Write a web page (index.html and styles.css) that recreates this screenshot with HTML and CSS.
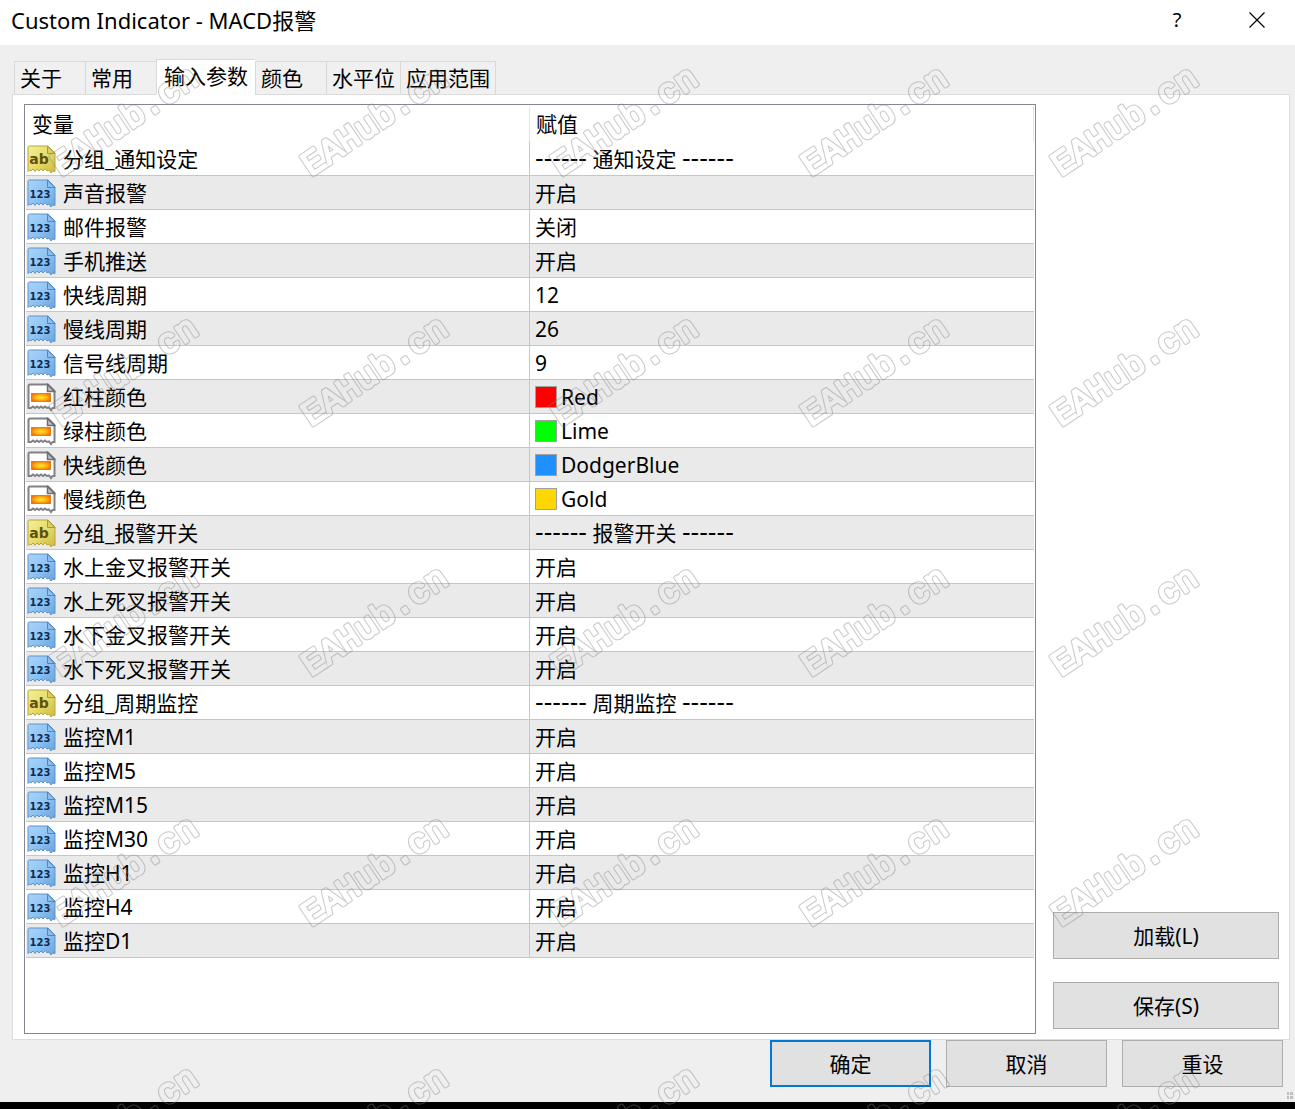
FILE: index.html
```html
<!DOCTYPE html>
<html lang="zh-CN">
<head>
<meta charset="utf-8">
<meta name="viewport" content="width=device-width, initial-scale=1">
<title>Custom Indicator - MACD报警</title>
<link rel="stylesheet" href="styles.css">
</head>
<body>
<svg class="defs" aria-hidden="true">
  <defs>
    <linearGradient id="blue" x1="0" y1="0" x2="1" y2="1"><stop offset="0" stop-color="#a9d4fb"/><stop offset=".5" stop-color="#8fc3f4"/><stop offset="1" stop-color="#65a3df"/></linearGradient>
    <linearGradient id="yellow" x1="0" y1="0" x2="1" y2="1"><stop offset="0" stop-color="#f5ef9c"/><stop offset=".5" stop-color="#e8dc6c"/><stop offset="1" stop-color="#cdb93f"/></linearGradient>
    <radialGradient id="amber" cx=".5" cy=".5" r=".6"><stop offset="0" stop-color="#ffe92e"/><stop offset=".5" stop-color="#ffb315"/><stop offset="1" stop-color="#f36a00"/></radialGradient>
    <symbol id="num" viewBox="0 -2 29 31">
      <path d="M1 2.500Q1 1 2.500 1H21L28 8V26.500L25.500 26L24 28L22 25L20 26L18.500 23.500L16 26L14 24L12 26L10 24L8 26.500L6 24L4 26L2.500 25L1 26.500Z" fill="url(#blue)" stroke="#5f93c6"/>
      <path d="M20.500 1V8.500H28Z" fill="#8dbdea" stroke="#4f87be"/>
      <text x="13" y="19" text-anchor="middle" class="glyph glyph-num">123</text>
    </symbol>
    <symbol id="str" viewBox="0 -2 29 31">
      <path d="M1 2.500Q1 1 2.500 1H21L28 8V26.500L25.500 26L24 28L22 25L20 26L18.500 23.500L16 26L14 24L12 26L10 24L8 26.500L6 24L4 26L2.500 25L1 26.500Z" fill="url(#yellow)" stroke="#b5a540"/>
      <path d="M20.500 1V8.500H28Z" fill="#dccf68" stroke="#ac9a32"/>
      <text x="12" y="19" text-anchor="middle" class="glyph glyph-str">ab</text>
    </symbol>
    <symbol id="clr" viewBox="0 -2 29 31">
      <path d="M1.500 3Q1.500 1.500 3 1.500H21L27.500 8V25L25.500 25L24 27L22 24.500L20 25L18 23.500L16 25L14 23.500L12 25L10 23.500L8 25L6 23.500L4 25L1.500 25Z" fill="#fff" stroke="#808285" stroke-width="2"/>
      <path d="M20.500 1.500V8.500H27.500Z" fill="#c4c4c6" stroke="#6c6e72" stroke-width="1.500"/>
      <rect x="4.500" y="10.500" width="19" height="8" fill="url(#amber)" stroke="#f07a10"/>
    </symbol>
    <mask id="outline" maskUnits="userSpaceOnUse" x="0" y="0" width="250" height="250">
      <g transform="translate(61 177) rotate(-34)" class="mark">
        <text class="mark-outer">EAHub.cn</text>
        <text class="mark-inner">EAHub.cn</text>
      </g>
    </mask>
    <pattern id="tile" width="250" height="250" patternUnits="userSpaceOnUse">
      <rect width="250" height="250" fill="#808080" fill-opacity=".42" mask="url(#outline)"/>
    </pattern>
  </defs>
</svg>

<main class="window">
  <header class="titlebar">
    <h1 class="title">Custom Indicator - MACD报警</h1>
    <button class="caption" type="button" aria-label="帮助"><span class="help">?</span></button>
    <button class="caption" type="button" aria-label="关闭"><svg width="16" height="16" viewBox="0 0 16 16"><path d="M.5.5L15.500 15.500M15.500.5L.5 15.500" stroke="#000" stroke-width="1.200"/></svg></button>
  </header>

  <div class="tabs" role="tablist">
    <button class="tab" type="button" role="tab">关于</button>
    <button class="tab" type="button" role="tab">常用</button>
    <button class="tab active" type="button" role="tab" aria-selected="true">输入参数</button>
    <button class="tab" type="button" role="tab">颜色</button>
    <button class="tab" type="button" role="tab">水平位</button>
    <button class="tab" type="button" role="tab">应用范围</button>
  </div>

  <section class="pane">
    <div class="list">
      <table class="params">
        <thead><tr><th>变量</th><th>赋值</th></tr></thead>
        <tbody>
          <tr><td><div class="cell"><svg class="icon"><use href="#str"/></svg>分组_通知设定</div></td><td><span class="dash">------</span> 通知设定 <span class="dash">------</span></td></tr>
          <tr><td><div class="cell"><svg class="icon"><use href="#num"/></svg>声音报警</div></td><td>开启</td></tr>
          <tr><td><div class="cell"><svg class="icon"><use href="#num"/></svg>邮件报警</div></td><td>关闭</td></tr>
          <tr><td><div class="cell"><svg class="icon"><use href="#num"/></svg>手机推送</div></td><td>开启</td></tr>
          <tr><td><div class="cell"><svg class="icon"><use href="#num"/></svg>快线周期</div></td><td>12</td></tr>
          <tr><td><div class="cell"><svg class="icon"><use href="#num"/></svg>慢线周期</div></td><td>26</td></tr>
          <tr><td><div class="cell"><svg class="icon"><use href="#num"/></svg>信号线周期</div></td><td>9</td></tr>
          <tr><td><div class="cell"><svg class="icon"><use href="#clr"/></svg>红柱颜色</div></td><td><div class="color"><span class="swatch red"></span>Red</div></td></tr>
          <tr><td><div class="cell"><svg class="icon"><use href="#clr"/></svg>绿柱颜色</div></td><td><div class="color"><span class="swatch lime"></span>Lime</div></td></tr>
          <tr><td><div class="cell"><svg class="icon"><use href="#clr"/></svg>快线颜色</div></td><td><div class="color"><span class="swatch dodger"></span>DodgerBlue</div></td></tr>
          <tr><td><div class="cell"><svg class="icon"><use href="#clr"/></svg>慢线颜色</div></td><td><div class="color"><span class="swatch gold"></span>Gold</div></td></tr>
          <tr><td><div class="cell"><svg class="icon"><use href="#str"/></svg>分组_报警开关</div></td><td><span class="dash">------</span> 报警开关 <span class="dash">------</span></td></tr>
          <tr><td><div class="cell"><svg class="icon"><use href="#num"/></svg>水上金叉报警开关</div></td><td>开启</td></tr>
          <tr><td><div class="cell"><svg class="icon"><use href="#num"/></svg>水上死叉报警开关</div></td><td>开启</td></tr>
          <tr><td><div class="cell"><svg class="icon"><use href="#num"/></svg>水下金叉报警开关</div></td><td>开启</td></tr>
          <tr><td><div class="cell"><svg class="icon"><use href="#num"/></svg>水下死叉报警开关</div></td><td>开启</td></tr>
          <tr><td><div class="cell"><svg class="icon"><use href="#str"/></svg>分组_周期监控</div></td><td><span class="dash">------</span> 周期监控 <span class="dash">------</span></td></tr>
          <tr><td><div class="cell"><svg class="icon"><use href="#num"/></svg>监控M1</div></td><td>开启</td></tr>
          <tr><td><div class="cell"><svg class="icon"><use href="#num"/></svg>监控M5</div></td><td>开启</td></tr>
          <tr><td><div class="cell"><svg class="icon"><use href="#num"/></svg>监控M15</div></td><td>开启</td></tr>
          <tr><td><div class="cell"><svg class="icon"><use href="#num"/></svg>监控M30</div></td><td>开启</td></tr>
          <tr><td><div class="cell"><svg class="icon"><use href="#num"/></svg>监控H1</div></td><td>开启</td></tr>
          <tr><td><div class="cell"><svg class="icon"><use href="#num"/></svg>监控H4</div></td><td>开启</td></tr>
          <tr><td><div class="cell"><svg class="icon"><use href="#num"/></svg>监控D1</div></td><td>开启</td></tr>
        </tbody>
      </table>
    </div>
    <div class="side">
      <button class="btn" type="button">加载(L)</button>
      <button class="btn" type="button">保存(S)</button>
    </div>
  </section>

  <footer class="actions">
    <button class="btn primary" type="button">确定</button>
    <button class="btn" type="button">取消</button>
    <button class="btn" type="button">重设</button>
    <svg class="grip" width="6" height="8" viewBox="0 0 6 8" aria-hidden="true"><path d="M0 0h2v3H0zM3 0h3v3H3zM0 4h2v3H0zM3 4h3v3H3z" fill="#bfbfbf"/></svg>
  </footer>

  <svg class="watermark" aria-hidden="true"><rect width="100%" height="100%" fill="url(#tile)"/></svg>
</main>
</body>
</html>
```
FILE: styles.css
```css
* { box-sizing: border-box; }

body {
  margin: 0;
  font: 21px/32px "Noto Sans", "Noto Sans CJK SC", sans-serif;
  color: #000;
  background: #000;
}

button { font: inherit; color: inherit; cursor: default; }

.defs { position: absolute; width: 0; height: 0; }

.window {
  position: relative;
  display: flex;
  flex-direction: column;
  min-height: 100vh;
  background: #efefef;
  border-bottom: 7px solid #000;
}

.titlebar {
  display: flex;
  align-items: center;
  height: 45px;
  padding: 0 0 6px 11px;
  background: #fff;
}
.title { flex: 1; margin: 0; font-size: 22px; font-weight: 400; }
.caption {
  display: flex;
  align-items: center;
  justify-content: center;
  width: 84px;
  height: 38px;
  padding: 0;
  border: 0;
  background: none;
}
.help { font-size: 20px; }
.caption + .caption { width: 76px; }

.tabs {
  display: flex;
  align-items: flex-end;
  height: 50px;
  padding-left: 14px;
  margin-bottom: -1px;
}
.tab {
  min-width: 71px;
  height: 34px;
  padding: 0 5px;
  border: 1px solid #d9d9d9;
  border-right-width: 0;
  background: #f0f0f0;
  text-align: left;
}
.tab:last-child { border-right-width: 1px; }
.tab.active {
  z-index: 1;
  height: 36px;
  padding: 0 7px 2px;
  border-bottom-color: #fff;
  background: #fff;
}

.pane {
  flex: 1;
  display: flex;
  gap: 17px;
  margin: 0 5px 0 12px;
  padding: 9px 10px 5px 11px;
  border: 1px solid #dcdcdc;
  background: #fff;
}

.list {
  flex: 1;
  padding: 1px;
  border: 1px solid #828790;
}
.params {
  width: 100%;
  table-layout: fixed;
  border-collapse: separate;
  border-spacing: 0;
}
.params th {
  height: 36px;
  padding: 0 6px;
  border-right: 1px solid #e5e5e5;
  font-weight: 400;
  text-align: left;
}
.params td {
  height: 34px;
  padding: 0 5px;
  border-bottom: 1px solid #c6c6c6;
}
.params td:first-child {
  padding: 0 1px;
  border-right: 1px solid #c6c6c6;
}
.params tbody tr:nth-child(even) { background: #eaeaea; }

.dash { font: 24px/20px "DejaVu Sans", sans-serif; }

.cell { display: flex; align-items: center; gap: 7px; }
.icon { flex: none; width: 29px; height: 31px; }
.glyph { font-family: "DejaVu Sans", sans-serif; font-weight: 700; }
.glyph-num { font-size: 10px; fill: #0b2d55; }
.glyph-str { font-size: 14px; fill: #5c5210; }

.color { display: flex; align-items: center; gap: 4px; }
.swatch { width: 22px; height: 22px; border: 1px solid #a0a0a0; }
.red { background: #f00; }
.lime { background: #0f0; }
.dodger { background: #1e90ff; }
.gold { background: #ffd700; }

.side {
  flex: none;
  display: flex;
  flex-direction: column;
  justify-content: flex-end;
  gap: 23px;
  width: 226px;
  padding-bottom: 5px;
}
.btn {
  height: 47px;
  padding: 0;
  border: 1px solid #adadad;
  background: #e1e1e1;
}
.btn.primary { border: 2px solid #0078d7; }

.actions {
  position: relative;
  display: flex;
  justify-content: flex-end;
  gap: 15px;
  padding: 0 12px 15px;
}
.actions .btn { width: 161px; }
.grip { position: absolute; right: 2px; bottom: 2px; }

/* Repeated mark laid over the whole dialog, bottom border included */
.watermark {
  position: absolute;
  z-index: 2;
  top: 0;
  left: 0;
  width: 100%;
  height: calc(100% + 7px);
  pointer-events: none;
}
.mark { font: 35px "Liberation Mono", monospace; stroke-linejoin: round; }
.mark-outer { fill: #fff; stroke: #fff; stroke-width: 4px; }
.mark-inner { fill: #000; stroke: #000; stroke-width: 2px; }
```
